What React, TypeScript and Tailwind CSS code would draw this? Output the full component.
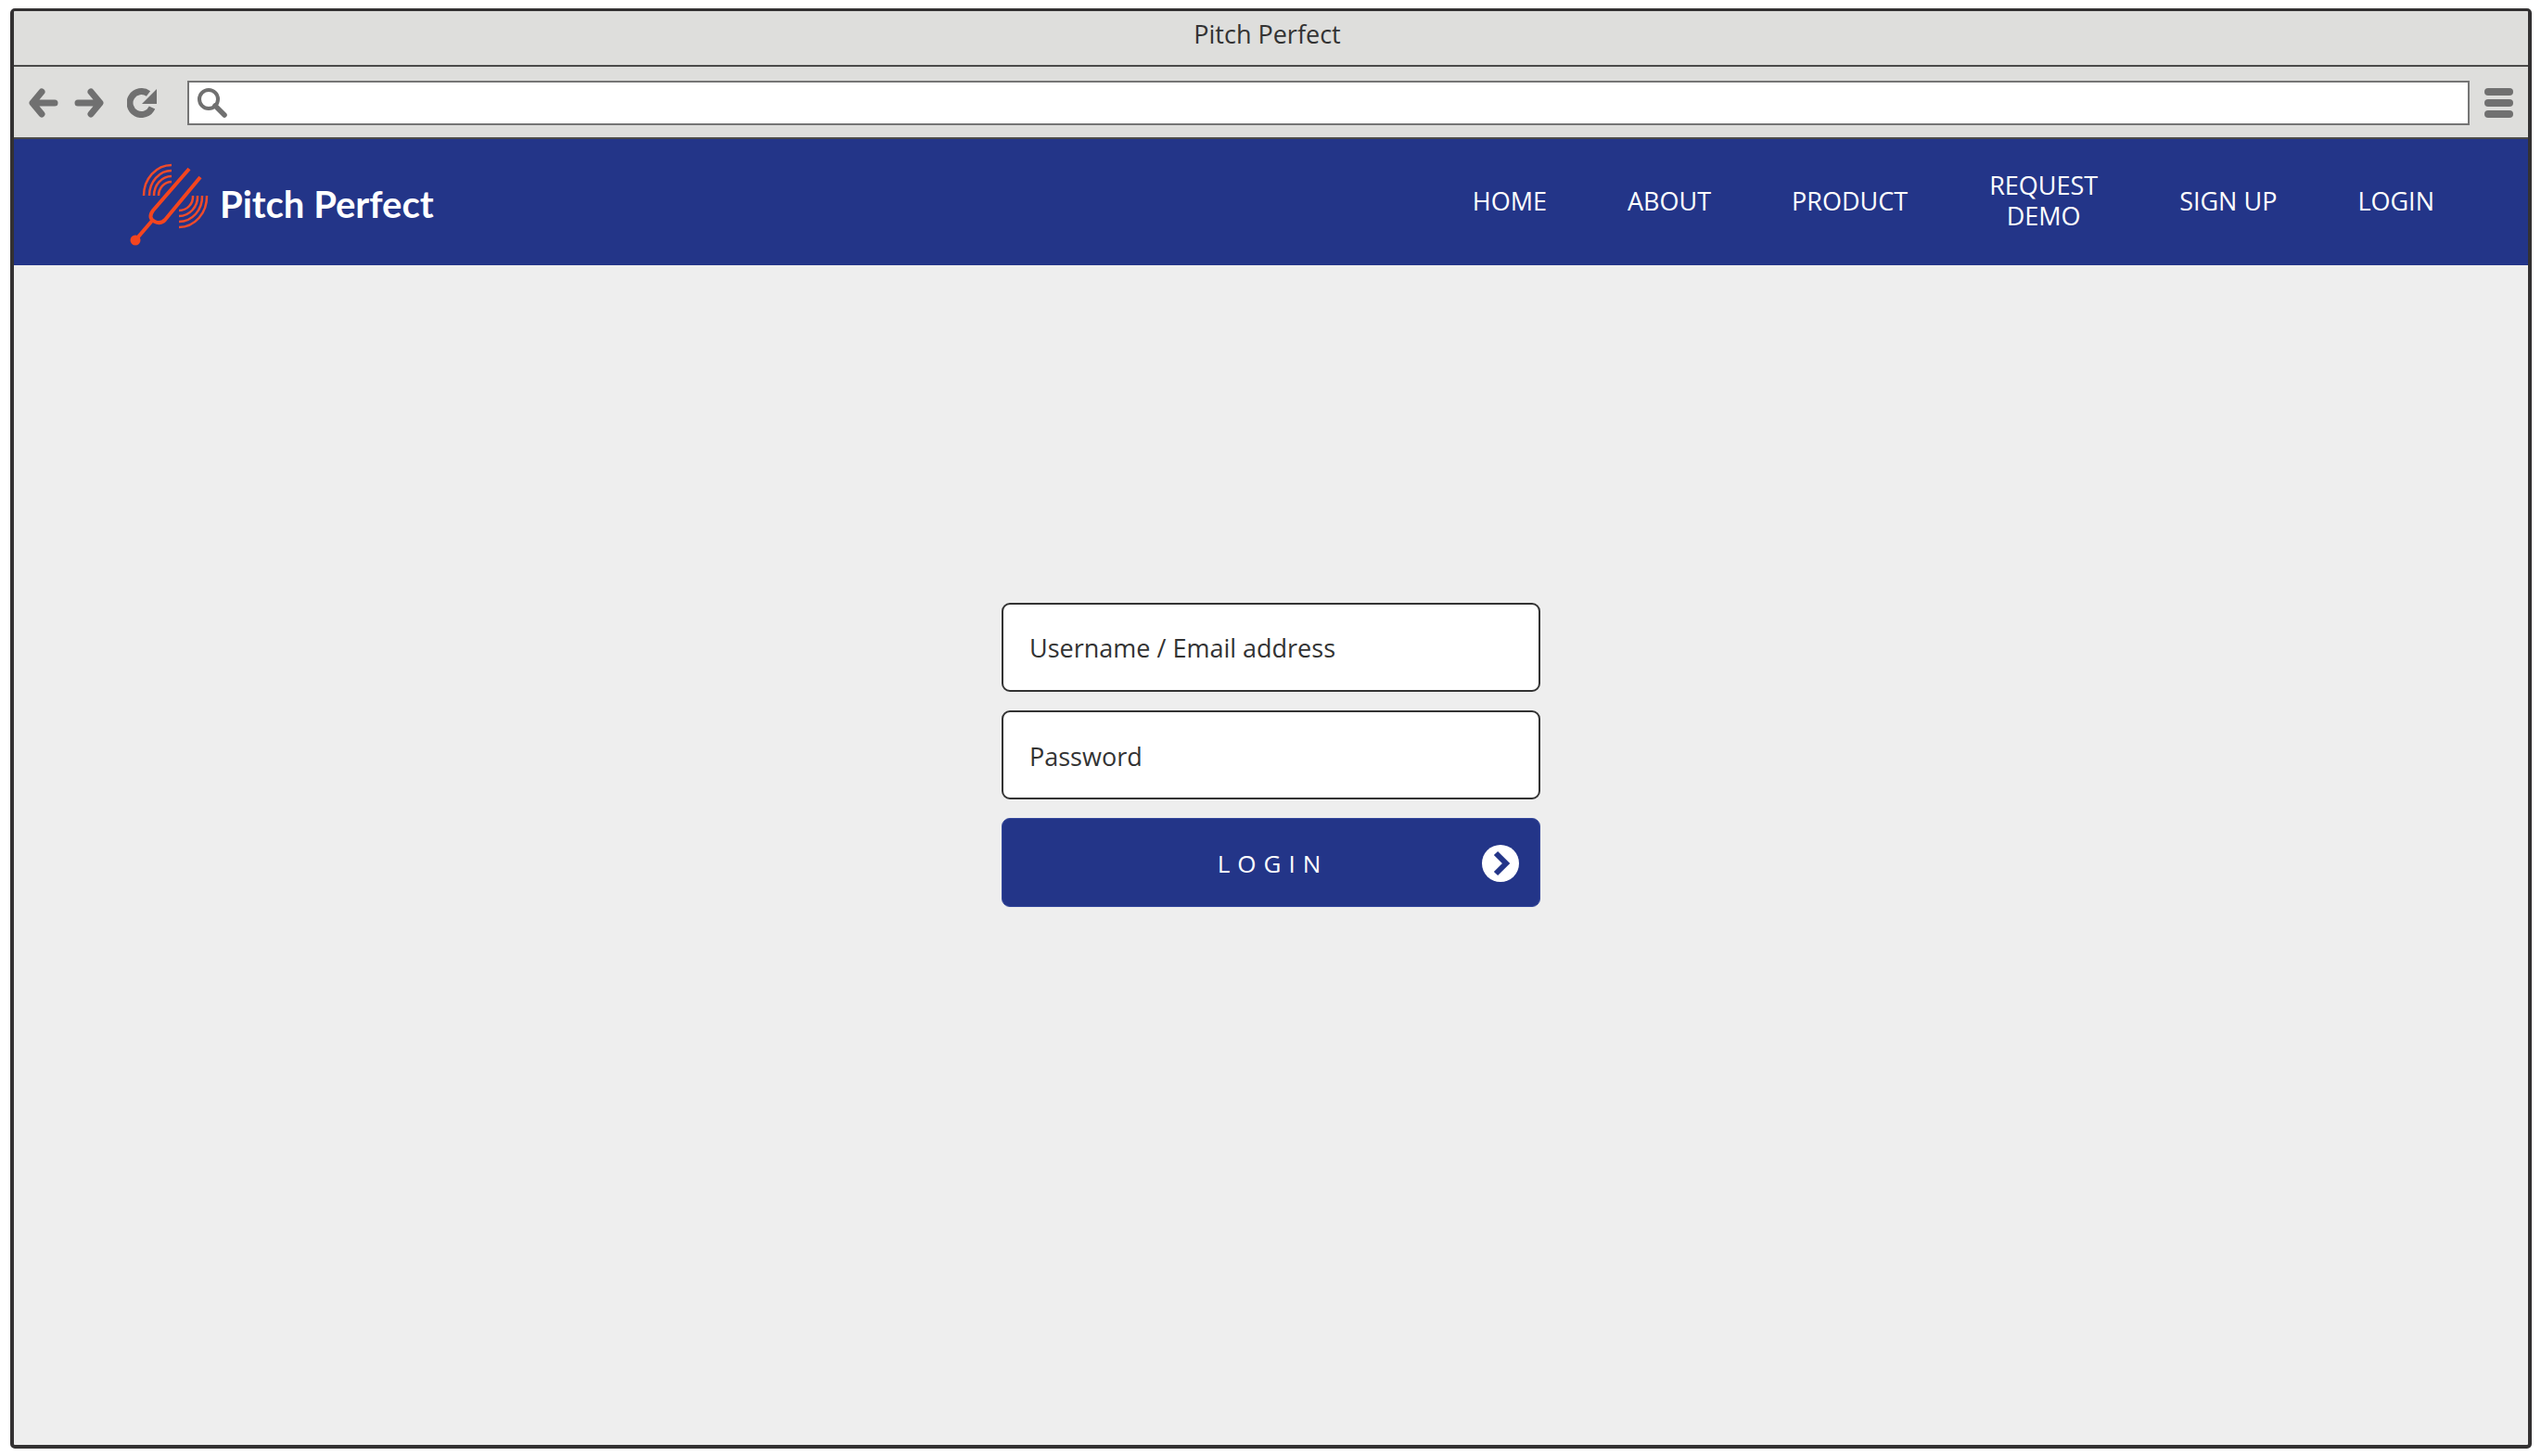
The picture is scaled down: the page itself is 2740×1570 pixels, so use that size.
function ToolbarIcons() {
  return (
    <div className="flex items-center shrink-0">
      <svg width="32" height="32" viewBox="0 0 32 32" className="ml-[16px]">
        <path d="M14 4 L4 16 L14 28 M5 16 H28" fill="none" stroke="#707070" strokeWidth="7" strokeLinecap="round" strokeLinejoin="round" />
      </svg>
      <svg width="32" height="32" viewBox="0 0 32 32" className="ml-[17px]">
        <path d="M18 4 L28 16 L18 28 M27 16 H4" fill="none" stroke="#707070" strokeWidth="7" strokeLinecap="round" strokeLinejoin="round" />
      </svg>
      <svg width="32" height="32" viewBox="0 0 32 32" className="ml-[25px]">
        <path d="M27 21 A12.5 12.5 0 1 1 23 6" fill="none" stroke="#707070" strokeWidth="7" />
        <path d="M32 1 V17 H16 Z" fill="#707070" />
      </svg>
    </div>
  );
}

function Logo() {
  return (
    <svg width="86" height="92" viewBox="19 14 86 92" className="shrink-0 mt-[5px]">
      <g fill="none" stroke="#ee4b2b" strokeWidth="2.5">
        <path d="M34 50 A30 33 0 0 1 64 17" />
        <path d="M40 50 A24 27 0 0 1 64 23" />
        <path d="M45 50 A19 21 0 0 1 64 29" />
        <path d="M50 50 A14 15 0 0 1 64 35" />
        <path d="M102 50 A30 33 0 0 1 72 84" />
        <path d="M97 50 A25 27 0 0 1 72 78" />
        <path d="M92 50 A20 21 0 0 1 72 72" />
        <path d="M87 50 A15 15 0 0 1 72 66" />
      </g>
      <path d="M83 21 L44 66 Q38 74 46 78 Q52 81 57 76 L95 30" fill="none" stroke="#f4451f" strokeWidth="4" />
      <path d="M43 77 L25 98" fill="none" stroke="#f4451f" strokeWidth="4" />
      <circle cx="25" cy="98" r="5.5" fill="#f4451f" />
    </svg>
  );
}

const navItems = ['HOME', 'ABOUT', 'PRODUCT', 'REQUEST DEMO', 'SIGN UP', 'LOGIN'];

export default function App() {
  return (
    <div className="bg-white w-[2740px] h-[1570px] pl-[11px] pt-[9px] font-['Open_Sans',sans-serif]">
      <div className="w-[2719px] h-[1553px] flex flex-col border-[3px] border-l-[4px] border-r-[4px] border-b-[4px] border-[#333132] rounded-[5px] overflow-hidden bg-[#eeeeee]">
        <div className="h-[60px] shrink-0 flex items-center justify-center bg-[#dededc] border-b-2 border-[#4a4a4a] text-[27px] text-[#333333] pr-[8px] pb-[8px]">
          Pitch Perfect
        </div>

        <div className="h-[78px] shrink-0 flex items-center pt-[2px] bg-[#dededc] border-b-2 border-[#4a4a4a]">
          <ToolbarIcons />
          <div className="ml-[33px] flex-1 h-[48px] flex items-center bg-white border-2 border-[#757575]">
            <svg width="34" height="34" viewBox="0 0 34 34" className="ml-[8px]">
              <circle cx="13" cy="13" r="10" fill="none" stroke="#707070" strokeWidth="4" />
              <path d="M20 20 L30 30" stroke="#707070" strokeWidth="5.5" strokeLinecap="round" />
            </svg>
          </div>
          <div className="ml-[16px] mr-[16px] w-[31px] shrink-0 flex flex-col gap-[4px]">
            <div className="h-[8px] rounded-full bg-[#707070]" />
            <div className="h-[8px] rounded-full bg-[#707070]" />
            <div className="h-[8px] rounded-full bg-[#707070]" />
          </div>
        </div>

        <header className="h-[136px] shrink-0 flex items-center bg-[#233588] pl-[125px] pr-[101px]">
          <Logo />
          <span className="ml-[11px] mt-[3px] font-['Lato',sans-serif] font-bold text-[40px] text-white">Pitch Perfect</span>
          <nav className="ml-auto flex items-center gap-[87px] text-[27px] leading-[33px] text-white pb-[4px]">
            {navItems.map((item) => (
              <a key={item} className={item === 'REQUEST DEMO' ? 'w-[119px] text-center' : ''}>
                {item}
              </a>
            ))}
          </nav>
        </header>

        <main className="flex-1 flex flex-col items-center pt-[364px] gap-[20px]">
          <div className="w-[581px] h-[96px] flex items-center pl-[28px] pt-[2px] bg-white border-2 border-[#333333] rounded-[9px] text-[27px] text-[#333333]">
            Username / Email address
          </div>
          <div className="w-[581px] h-[96px] flex items-center pl-[28px] pt-[4px] bg-white border-2 border-[#333333] rounded-[9px] text-[27px] text-[#333333]">
            Password
          </div>
          <button className="relative w-[581px] h-[96px] flex items-center justify-center pt-[2px] pl-[4px] bg-[#233588] border border-[#34479b] rounded-[9px] text-[26px] tracking-[8px] text-white">
            LOGIN
            <svg width="40" height="40" viewBox="0 0 40 40" className="absolute right-[22px] top-[28px]">
              <circle cx="20" cy="20" r="20" fill="#ffffff" />
              <path d="M15 9 L26 20 L15 31" fill="none" stroke="#233588" strokeWidth="6" strokeLinejoin="miter" />
            </svg>
          </button>
        </main>
      </div>
    </div>
  );
}
